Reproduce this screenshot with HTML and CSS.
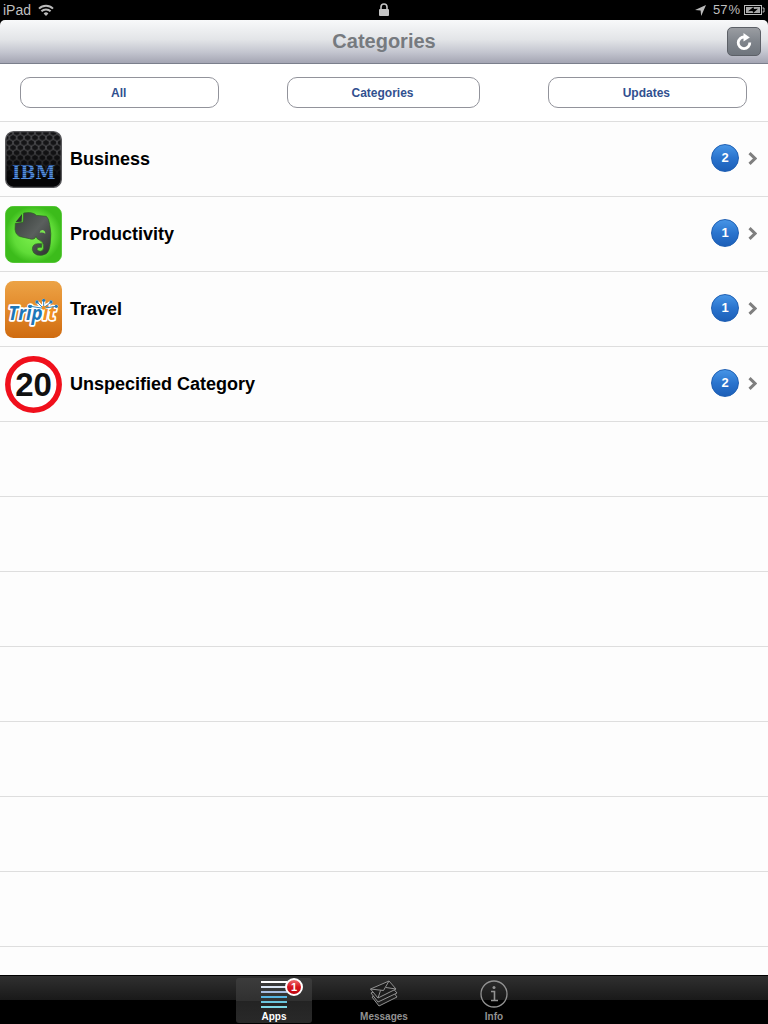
FILE: index.html
```html
<!doctype html>
<html lang="en">
  <head>
    <title>Categories</title>
    <meta charset="utf-8">
    <meta name="viewport" content="width=device-width,initial-scale=1.0">
    <link rel="stylesheet" href="styles.css">
  </head>
  <body>
    <div class="status">
      <div class="status-left">
        <span>iPad</span>
        <svg width="16" height="12" viewBox="0 0 16 12" fill="none" stroke="#bbb" stroke-width="2">
          <path d="M1 4.6a10 10 0 0 1 14 0M3.4 7.3a6.5 6.5 0 0 1 9.2 0"/>
          <path d="M8 12L5.6 9.5a3.4 3.4 0 0 1 4.8 0z" fill="#bbb" stroke="none"/>
        </svg>
      </div>
      <svg width="10" height="14" viewBox="0 0 10 14">
        <path d="M2 7V4a3 3 0 0 1 6 0v3" fill="none" stroke="#c4c4c4" stroke-width="1.6"/>
        <rect y="6" width="10" height="7" rx="1" fill="#c4c4c4"/>
      </svg>
      <div class="status-right">
        <svg width="11" height="11" viewBox="0 0 11 11"><path d="M11 0L6.2 11 5.6 5.6 0 5z" fill="#bbb"/></svg>
        <span class="percent"><span>57</span><span>%</span></span>
        <svg width="21" height="10" viewBox="0 0 21 10">
          <rect x=".5" y=".5" width="17" height="9" fill="none" stroke="#bbb"/>
          <rect x="2" y="2" width="14" height="6" fill="#aaa"/>
          <path d="M18.5 3h1.5v4h-1.5" fill="none" stroke="#bbb"/>
          <path d="M4 6.2L9.5 2l.5 2 4-.3L9.300 8 8.500 5.900z" fill="#000"/>
        </svg>
      </div>
    </div>

    <header class="navbar">
      <h1>Categories</h1>
      <button class="refresh" type="button" aria-label="Refresh">
        <svg width="18" height="18" viewBox="0 0 18 18">
          <path d="M9.5 4A5.8 5.8 0 1 0 14.8 9.5" fill="none" stroke="#fff" stroke-width="2.8"/>
          <path d="M8.5 0L14.8 4.6 8.5 8.600z" fill="#fff"/>
        </svg>
      </button>
    </header>

    <nav class="filters">
      <button type="button">All</button>
      <button type="button">Categories</button>
      <button type="button">Updates</button>
    </nav>

    <main>
      <ul class="list">
        <li>
          <a href="#business">
            <svg class="icon" viewBox="15 18 171 171">
              <defs>
                <pattern id="hex" width="22" height="30" patternUnits="userSpaceOnUse" x="17" y="20">
                  <rect width="22" height="30" fill="#525255"/>
                  <path d="M11 -6l9 5v8l-9 5-9-5v-8zM11 24l9 5v8l-9 5-9-5v-8zM0 9l9 5v8l-9 5-9-5v-8zM22 9l9 5v8l-9 5-9-5v-8z" fill="#141416"/>
                </pattern>
                <linearGradient id="shade" x2="0" y2="1">
                  <stop offset=".3" stop-color="#000" stop-opacity="0"/>
                  <stop offset=".85" stop-color="#050507"/>
                </linearGradient>
                <pattern id="bars" width="8" height="6" patternUnits="userSpaceOnUse" y="117">
                  <rect width="8" height="6" fill="#1d3f75"/>
                  <rect width="8" height="4" fill="#5590e0"/>
                </pattern>
              </defs>
              <rect x="17" y="20" width="167" height="167" rx="24" fill="url(#hex)"/>
              <rect x="17" y="20" width="167" height="167" rx="24" fill="url(#shade)" stroke="#58585b" stroke-width="4"/>
              <text x="101" y="162" class="ibm" fill="url(#bars)">IBM</text>
            </svg>
            <span class="name">Business</span>
            <span class="count">2</span>
            <svg class="chevron" viewBox="0 0 9 13"><path d="M1.5 1.2L7 6.5l-5.5 5.3"/></svg>
          </a>
        </li>
        <li>
          <a href="#productivity">
            <svg class="icon" viewBox="15 18 171 171">
              <defs>
                <radialGradient id="green">
                  <stop offset="0" stop-color="#7df04e"/>
                  <stop offset=".7" stop-color="#60dc38"/>
                  <stop offset="1" stop-color="#3cbc1b"/>
                </radialGradient>
                <linearGradient id="skin" x2="1" y2="1">
                  <stop offset="0" stop-color="#353b38"/>
                  <stop offset=".5" stop-color="#5a5f5d"/>
                  <stop offset="1" stop-color="#2c302e"/>
                </linearGradient>
              </defs>
              <rect x="16" y="19" width="169" height="169" rx="25" fill="url(#green)" stroke="#3fc01c" stroke-width="2"/>
              <path d="M46 70L69 67 71 39Q98 34 109 46L139 49Q146 54 149 73 155 101 151 129 149 153 139 161 127 169 111 165 98 160 97 148 97 132 113 131H125V142H117Q110 143 111 148 113 154 121 154 131 153 131 141 131 126 119 121 110 117 108 110 103 121 88 116L61 110Q47 106 45 88z" fill="url(#skin)" stroke="#2c6420" stroke-width="2"/>
              <path d="M47 66L66 42 65 65z" fill="#303633"/>
              <path d="M119 98Q120 89 128 90 136 92 136 101 128 96 119 98z" fill="#79e44e"/>
            </svg>
            <span class="name">Productivity</span>
            <span class="count">1</span>
            <svg class="chevron" viewBox="0 0 9 13"><path d="M1.5 1.2L7 6.5l-5.5 5.3"/></svg>
          </a>
        </li>
        <li>
          <a href="#travel">
            <svg class="icon" viewBox="15 18 171 171">
              <defs>
                <linearGradient id="orange" x2="0" y2="1">
                  <stop offset="0" stop-color="#eca346"/>
                  <stop offset=".5" stop-color="#e2892a"/>
                  <stop offset="1" stop-color="#cf6b10"/>
                </linearGradient>
              </defs>
              <rect x="15" y="18" width="171" height="171" rx="25" fill="url(#orange)"/>
              <path d="M90 94L130 100 170 94M111 81L130 100 153 81M131 76V100" fill="none" stroke="#fff" stroke-width="10" stroke-linecap="round"/>
              <text x="25" y="136" class="tripit"><tspan fill="#1d76b8">Trip</tspan><tspan fill="#f09021">it</tspan></text>
              <path d="M92 94L130 100 168 94M112 82L130 100 152 82M131 77V100" fill="none" stroke="#3487bd" stroke-width="3"/>
              <g fill="#2879b3">
                <circle cx="89" cy="94" r="5"/><circle cx="111" cy="81" r="5"/><circle cx="131" cy="76" r="5"/>
                <circle cx="153" cy="81" r="5"/><circle cx="169" cy="94" r="5"/>
              </g>
              <circle cx="131" cy="98" r="6" fill="#f09021"/>
            </svg>
            <span class="name">Travel</span>
            <span class="count">1</span>
            <svg class="chevron" viewBox="0 0 9 13"><path d="M1.5 1.2L7 6.5l-5.5 5.3"/></svg>
          </a>
        </li>
        <li>
          <a href="#unspecified">
            <svg class="icon" viewBox="0 0 57 57">
              <circle cx="28.5" cy="28.5" r="25.7" fill="#fff" stroke="#f0101c" stroke-width="5.5"/>
              <text x="28.5" y="40" class="limit">20</text>
            </svg>
            <span class="name">Unspecified Category</span>
            <span class="count">2</span>
            <svg class="chevron" viewBox="0 0 9 13"><path d="M1.5 1.2L7 6.5l-5.5 5.3"/></svg>
          </a>
        </li>
      </ul>
    </main>

    <nav class="tabs">
      <a class="tab active" href="#apps">
        <svg width="28" height="28" viewBox="0 0 28 28" stroke-width="2">
          <path d="M1 2h26" stroke="#fff"/>
          <path d="M1 7h26" stroke="#dbe5f3"/>
          <path d="M1 12h26" stroke="#a6bce0"/>
          <path d="M1 17h26" stroke="#55b4e2"/>
          <path d="M1 22h26" stroke="#69c5dc"/>
          <path d="M1 27h26" stroke="#7ed8e6"/>
        </svg>
        <span>Apps</span>
        <b class="alert">1</b>
      </a>
      <a class="tab" href="#messages">
        <svg width="28" height="28" viewBox="0 0 28 28" fill="#1c1c1c" stroke="#929292" stroke-linejoin="round">
          <path d="M2 17L21 9l6 8L9 26z"/>
          <path d="M1 13L20 5l7 8L8 22z"/>
          <path d="M.5 9L19 1l7 8L8 18z"/>
          <path d="M.5 9l13 1.5L19 1M8 18l2.500-7.500M26 9l-10-1.500" fill="none"/>
        </svg>
        <span>Messages</span>
      </a>
      <a class="tab" href="#info">
        <svg width="28" height="28" viewBox="0 0 28 28" fill="none" stroke="#929292">
          <circle cx="14" cy="14" r="13" stroke-width="1.3"/>
          <path d="M11 11.5h3.5v9M11 20.5h7" stroke-width="1.6"/>
          <circle cx="14" cy="7.5" r="1.5" fill="#929292" stroke="none"/>
        </svg>
        <span>Info</span>
      </a>
    </nav>
  </body>
</html>
```
FILE: styles.css
```css
*{
  box-sizing:border-box;
}
html,body{
  margin:0;
  padding:0;
}
body{
  display:flex;
  flex-direction:column;
  min-height:100vh;
  background:#000;
  font-family:"Liberation Sans",Arial,sans-serif;
}
svg{
  display:block;
  flex:none;
}
button{
  font-family:inherit;
  padding:0;
}
a{
  color:inherit;
  text-decoration:none;
}

/* status bar */
.status{
  display:grid;
  grid-template-columns:1fr auto 1fr;
  align-items:center;
  height:20px;
  padding:0 3px;
  color:#bfbfbf;
  font-size:14px;
  line-height:20px;
}
.status-left,.status-right{
  display:flex;
  align-items:center;
  gap:7px;
}
.status-right{
  justify-content:flex-end;
  gap:4px;
}
.percent{
  display:flex;
  gap:1px;
  margin-left:3px;
  font-size:13px;
}

/* title bar */
.navbar{
  display:grid;
  grid-template-columns:1fr auto 1fr;
  align-items:center;
  height:44px;
  padding:0 7px;
  border-bottom:1px solid #7b7f8c;
  border-radius:5px 5px 0 0;
  background:linear-gradient(#f8f9fa,#e3e5e8 45%,#c3c5cf 75%,#a4a5b3);
}
.navbar h1{
  grid-column:2;
  margin:0;
  padding-bottom:2px;
  color:#767a7f;
  font-size:20px;
  line-height:24px;
}
.refresh{
  display:flex;
  justify-content:center;
  align-items:center;
  justify-self:end;
  width:34px;
  height:29px;
  border:1px solid #5c6067;
  border-radius:5px;
  background:linear-gradient(#9a9da2,#80858c 50%,#6f757d);
}

/* filter buttons */
.filters{
  display:grid;
  grid-template-columns:199fr 192fr 199fr;
  gap:68px;
  padding:13px 21px 13px 20px;
  border-bottom:1px solid #dedede;
  background:#fff;
}
.filters button{
  height:31px;
  padding-right:2px;
  border:1px solid #92939b;
  border-radius:10px;
  background:#fff;
  color:#31508f;
  font-size:12px;
  font-weight:bold;
}

/* category list, the lines go on below the last row */
main{
  flex:1;
  background:repeating-linear-gradient(#fdfdfd 0,#fdfdfd 74px,#dedede 74px,#dedede 75px);
}
.list{
  margin:0;
  padding:0;
  list-style:none;
}
.list a{
  display:flex;
  align-items:center;
  height:75px;
  padding:0 10px 1px 5px;
  color:#000;
}
.icon{
  width:57px;
  height:57px;
}
.name{
  flex:1;
  margin-left:8px;
  font-size:18px;
  font-weight:bold;
}
.count{
  width:28px;
  height:28px;
  margin:0 9px 2px 0;
  border:1px solid #1d5fb4;
  border-radius:50%;
  background:linear-gradient(#4795e6,#2a74ce 50%,#1c5fb8);
  color:#fff;
  font-size:13px;
  font-weight:bold;
  line-height:26px;
  text-align:center;
}
.chevron{
  width:9px;
  height:13px;
  margin:0 1px 2px 0;
  fill:none;
  stroke:#7f7f7f;
  stroke-width:3;
}
.ibm{
  font:bold 54px "DejaVu Serif",serif;
  text-anchor:middle;
}
.tripit{
  font:italic bold 56px "Open Sans",sans-serif;
  stroke:#fff;
  stroke-width:10px;
  stroke-linejoin:round;
  paint-order:stroke;
}
.limit{
  font:bold 33px "Liberation Sans",sans-serif;
  text-anchor:middle;
  fill:#111;
}

/* tab bar */
.tabs{
  display:flex;
  justify-content:center;
  gap:34px;
  height:49px;
  padding-top:2px;
  border-top:1px solid #000;
  background:linear-gradient(#303030,#191919 24px,#000 24px);
}
.tab{
  position:relative;
  display:flex;
  flex-direction:column;
  align-items:center;
  width:76px;
  height:45px;
  padding-top:2px;
  border-radius:3px;
  color:#929292;
  font-size:10px;
  font-weight:bold;
  line-height:17px;
}
.tab.active{
  background:linear-gradient(#3c3c3c,#303030 50%,#232323 50%,#292929);
  color:#fff;
}
.alert{
  position:absolute;
  top:0;
  right:9px;
  width:18px;
  height:18px;
  border:2px solid #fff;
  border-radius:50%;
  background:linear-gradient(#ee6b70,#d5121c 50%,#c00510);
  color:#fff;
  font-size:11px;
  line-height:14px;
  text-align:center;
}
```
